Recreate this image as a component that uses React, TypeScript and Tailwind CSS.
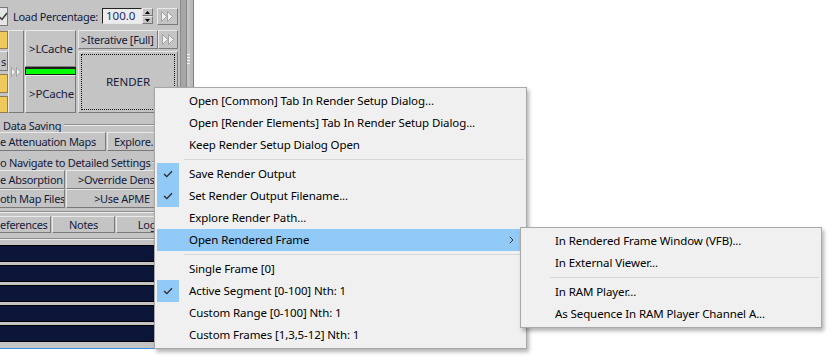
import React from "react";

type Item =
  | { kind: "sep" }
  | { kind: "item"; label: string; checked?: boolean; active?: boolean; sub?: boolean };

const mainItems: Item[] = [
  { kind: "item", label: "Open [Common] Tab In Render Setup Dialog..." },
  { kind: "item", label: "Open [Render Elements] Tab In Render Setup Dialog..." },
  { kind: "item", label: "Keep Render Setup Dialog Open" },
  { kind: "sep" },
  { kind: "item", label: "Save Render Output", checked: true },
  { kind: "item", label: "Set Render Output Filename...", checked: true },
  { kind: "item", label: "Explore Render Path..." },
  { kind: "item", label: "Open Rendered Frame", active: true, sub: true },
  { kind: "sep" },
  { kind: "item", label: "Single Frame [0]" },
  { kind: "item", label: "Active Segment [0-100] Nth: 1", checked: true },
  { kind: "item", label: "Custom Range [0-100] Nth: 1" },
  { kind: "item", label: "Custom Frames [1,3,5-12] Nth: 1" },
];

const subItems: Item[] = [
  { kind: "item", label: "In Rendered Frame Window (VFB)..." },
  { kind: "item", label: "In External Viewer..." },
  { kind: "sep" },
  { kind: "item", label: "In RAM Player..." },
  { kind: "item", label: "As Sequence In RAM Player Channel A..." },
];

const Check = () => (
  <svg width="10" height="8" viewBox="0 0 10 8">
    <path d="M1 4 L3.8 6.6 L9 1.2" fill="none" stroke="#2b2b2b" strokeWidth="1.3" />
  </svg>
);

const Chevron = () => (
  <svg width="5" height="8" viewBox="0 0 5 8">
    <path d="M0.8 0.8 L4 4 L0.8 7.2" fill="none" stroke="#3a3a3a" strokeWidth="1" />
  </svg>
);

// the ">>" double triangles on the max buttons (greyed out look)
const Arrows = ({ small = false }: { small?: boolean }) =>
  small ? (
    <svg width="11" height="10" viewBox="0 0 11 10">
      <path d="M0.5 0.5 L4.5 5 L0.5 9.5 Z" fill="#f2f2f2" stroke="#a2a2a2" />
      <path d="M5.5 0.5 L9.5 5 L5.5 9.5 Z" fill="#f2f2f2" stroke="#a2a2a2" />
    </svg>
  ) : (
    <svg width="13" height="11" viewBox="0 0 13 11">
      <path d="M0.5 0.5 L5.5 5.5 L0.5 10.5 Z" fill="#f2f2f2" stroke="#a2a2a2" />
      <path d="M6.5 0.5 L11.5 5.5 L6.5 10.5 Z" fill="#f2f2f2" stroke="#a2a2a2" />
    </svg>
  );

const Btn: React.FC<{ className?: string; children?: React.ReactNode }> = ({
  className = "",
  children,
}) => (
  <div
    className={`flex shrink-0 items-center overflow-hidden whitespace-nowrap border border-t-[#e9e9e9] border-l-[#e9e9e9] border-b-[#7a7a7a] border-r-[#7a7a7a] bg-[#c4c4c4] ${className}`}
  >
    {children}
  </div>
);

const Groove = () => (
  <div className="flex flex-1 flex-col">
    <div className="h-px bg-[#8e8e8e]" />
    <div className="h-px bg-[#ececec]" />
  </div>
);

function Menu({ items, className }: { items: Item[]; className: string }) {
  return (
    <div
      className={`absolute flex flex-col border border-[#a8a8a8] bg-[#f0f0f0] p-[2px] shadow-[2px_3px_4px_rgba(0,0,0,0.3)] ${className}`}
    >
      {items.map((it, i) =>
        it.kind === "sep" ? (
          <div key={i} className="flex h-[7px] items-center pl-[27px]">
            <div className="h-px flex-1 bg-[#d7d7d7]" />
          </div>
        ) : (
          <div
            key={i}
            className={`flex h-[22px] items-center ${it.active ? "bg-[#91c9f7]" : ""}`}
          >
            <div
              className={`flex h-[22px] w-[22px] shrink-0 items-center justify-center ${
                it.checked ? "bg-[#91c9f7]" : ""
              }`}
            >
              {it.checked && <Check />}
            </div>
            <span className="ml-[10px] flex-1 whitespace-nowrap text-[11.5px] leading-none tracking-[-0.1px] text-black">
              {it.label}
            </span>
            {it.sub && (
              <span className="mr-[10px] flex">
                <Chevron />
              </span>
            )}
          </div>
        )
      )}
    </div>
  );
}

function LeftPanel() {
  return (
    <div className="flex h-[349px] w-[194px] whitespace-nowrap text-[11px] leading-none tracking-[-0.3px] text-[#141b3b]">
      <div className="flex w-[193px] flex-col">
        <div className="flex flex-1">
          <div className="flex w-[180px] flex-col bg-[#c4c4c4]">
            {/* load percentage row */}
            <div className="flex h-[30px] items-center pt-[2px]">
              <div className="flex h-[19px] w-[8px] items-center overflow-hidden border-y border-r border-y-[#7a7a7a] border-r-[#7a7a7a] bg-[#e6e6e6]">
                <svg width="8" height="9" viewBox="0 0 8 9" className="shrink-0">
                  <path d="M-1 4.5 L2 7.5 L7 1" fill="none" stroke="#333" strokeWidth="1.4" />
                </svg>
              </div>
              <span className="ml-[5px] w-[89px]">Load Percentage:</span>
              <div className="flex h-[16px] w-[40px] items-center border border-t-[#222] border-l-[#222] border-b-[#e8e8e8] border-r-[#e8e8e8] bg-[#ececec] pl-[3px] text-[11.5px] tracking-normal text-[#1a2a6a]">
                100.0
              </div>
              <div className="flex h-[16px] w-[11px] flex-col">
                <div className="flex flex-1 items-center justify-center border border-t-[#e9e9e9] border-l-[#e9e9e9] border-b-[#7a7a7a] border-r-[#7a7a7a]">
                  <svg width="5" height="3" viewBox="0 0 5 3">
                    <path d="M2.5 0 L5 3 L0 3 Z" fill="#000" />
                  </svg>
                </div>
                <div className="flex flex-1 items-center justify-center border border-t-[#e9e9e9] border-l-[#e9e9e9] border-b-[#7a7a7a] border-r-[#7a7a7a]">
                  <svg width="5" height="3" viewBox="0 0 5 3">
                    <path d="M0 0 L5 0 L2.5 3 Z" fill="#000" />
                  </svg>
                </div>
              </div>
              <Btn className="ml-[4px] h-[17px] w-[21px] justify-center">
                <Arrows />
              </Btn>
            </div>

            {/* cache / render block */}
            <div className="flex h-[83px]">
              <div className="flex w-[8px] flex-col pt-[1px]">
                <div className="h-[18px] border-y border-r border-[#8f7d4c] bg-[#f0c95c]" />
                <Btn className="mt-[2px] h-[20px] justify-end border-l-0 pr-[1px]">s</Btn>
                <div className="mt-[3px] h-[19px] border-y border-r border-[#8f7d4c] bg-[#f0c95c]" />
                <div className="mt-[3px] h-[17px] border-y border-r border-[#8f7d4c] bg-[#f0c95c]" />
              </div>
              <Btn className="h-[83px] w-[16px] justify-center">
                <Arrows small />
              </Btn>
              <div className="ml-[1px] flex w-[51px] flex-col text-[11.5px] tracking-[-0.2px]">
                <Btn className="h-[37px] pl-[3px]">&gt;LCache</Btn>
                <div className="h-[8px] border border-t-2 border-[#1c1c1c] bg-[#00ff00]" />
                <Btn className="h-[38px] pl-[3px]">&gt;PCache</Btn>
              </div>
              <div className="ml-[2px] flex w-[100px] flex-col">
                <div className="flex h-[19px]">
                  <Btn className="h-[19px] w-[80px] pl-[2px]">&gt;Iterative [Full]</Btn>
                  <Btn className="h-[19px] w-[20px] justify-center">
                    <Arrows />
                  </Btn>
                </div>
                <Btn className="mt-[2px] h-[62px] p-[2px]">
                  <div className="flex h-full w-full items-center justify-center border border-dotted border-[#111] text-[11.5px] tracking-normal">
                    RENDER
                  </div>
                </Btn>
              </div>
            </div>

            {/* data saving group */}
            <div className="mt-[5px] flex h-[14px] items-center">
              <span className="pl-[3px] pr-[3px]">Data Saving</span>
              <Groove />
            </div>
            <div className="flex h-[19px]">
              <Btn className="h-[19px] w-[106px] border-l-0">e Attenuation Maps</Btn>
              <Btn className="ml-[1px] h-[19px] w-[71px] pl-[6px]">Explore...</Btn>
            </div>

            {/* navigate group */}
            <div className="mt-[3px] flex h-[16px] items-center">
              <span className="pr-[2px]">o Navigate to Detailed Settings</span>
              <Groove />
            </div>
            <div className="flex h-[19px]">
              <Btn className="h-[19px] w-[65px] border-l-0">e Absorption</Btn>
              <Btn className="ml-[1px] h-[19px] w-[112px] justify-center">&gt;Override Density</Btn>
            </div>
            <div className="flex h-[19px]">
              <Btn className="h-[19px] w-[65px] border-l-0">oth Map Files</Btn>
              <Btn className="ml-[1px] h-[19px] w-[112px] justify-center">&gt;Use APME</Btn>
            </div>

            <div className="flex h-[8px] items-center">
              <Groove />
            </div>
            <div className="flex h-[17px]">
              <Btn className="h-[17px] w-[51px] border-l-0">eferences</Btn>
              <Btn className="ml-[1px] h-[17px] w-[63px] justify-center">Notes</Btn>
              <Btn className="ml-[1px] h-[17px] w-[62px] justify-center">Log</Btn>
            </div>

            <div className="flex h-[12px] items-center">
              <Groove />
            </div>
            {/* progress / status bars */}
            <div className="flex flex-col gap-[3px]">
              {[0, 1, 2, 3, 4].map((n) => (
                <div key={n} className="h-[17px] border-y border-[#000] bg-[#0b1638]" />
              ))}
            </div>
          </div>
          {/* splitter strip */}
          <div className="w-[7px] border-x border-[#8a8a8a] bg-[#a6a6a6]" />
          <div className="flex w-[3px] flex-col gap-[2px] bg-[#c4c4c4] pt-[54px]">
            {[0, 1, 2, 3].map((n) => (
              <div key={n} className="h-px bg-[#f4f4f4]" />
            ))}
          </div>
          <div className="w-[3px] bg-[#b9b9b9]" />
        </div>
        <div className="h-[2px] bg-[#c4c4c4]" />
        <div className="h-[1px] bg-[#3d8ee6]" />
      </div>
      <div className="w-[1px] bg-[#3d8ee6]" />
    </div>
  );
}

export default function App() {
  return (
    <div className="relative h-[363px] w-[832px] overflow-hidden bg-white font-['Noto_Sans',sans-serif]">
      <LeftPanel />
      <Menu items={mainItems} className="left-[154px] top-[87px] w-[373px]" />
      <Menu items={subItems} className="left-[520px] top-[227px] w-[302px]" />
    </div>
  );
}
